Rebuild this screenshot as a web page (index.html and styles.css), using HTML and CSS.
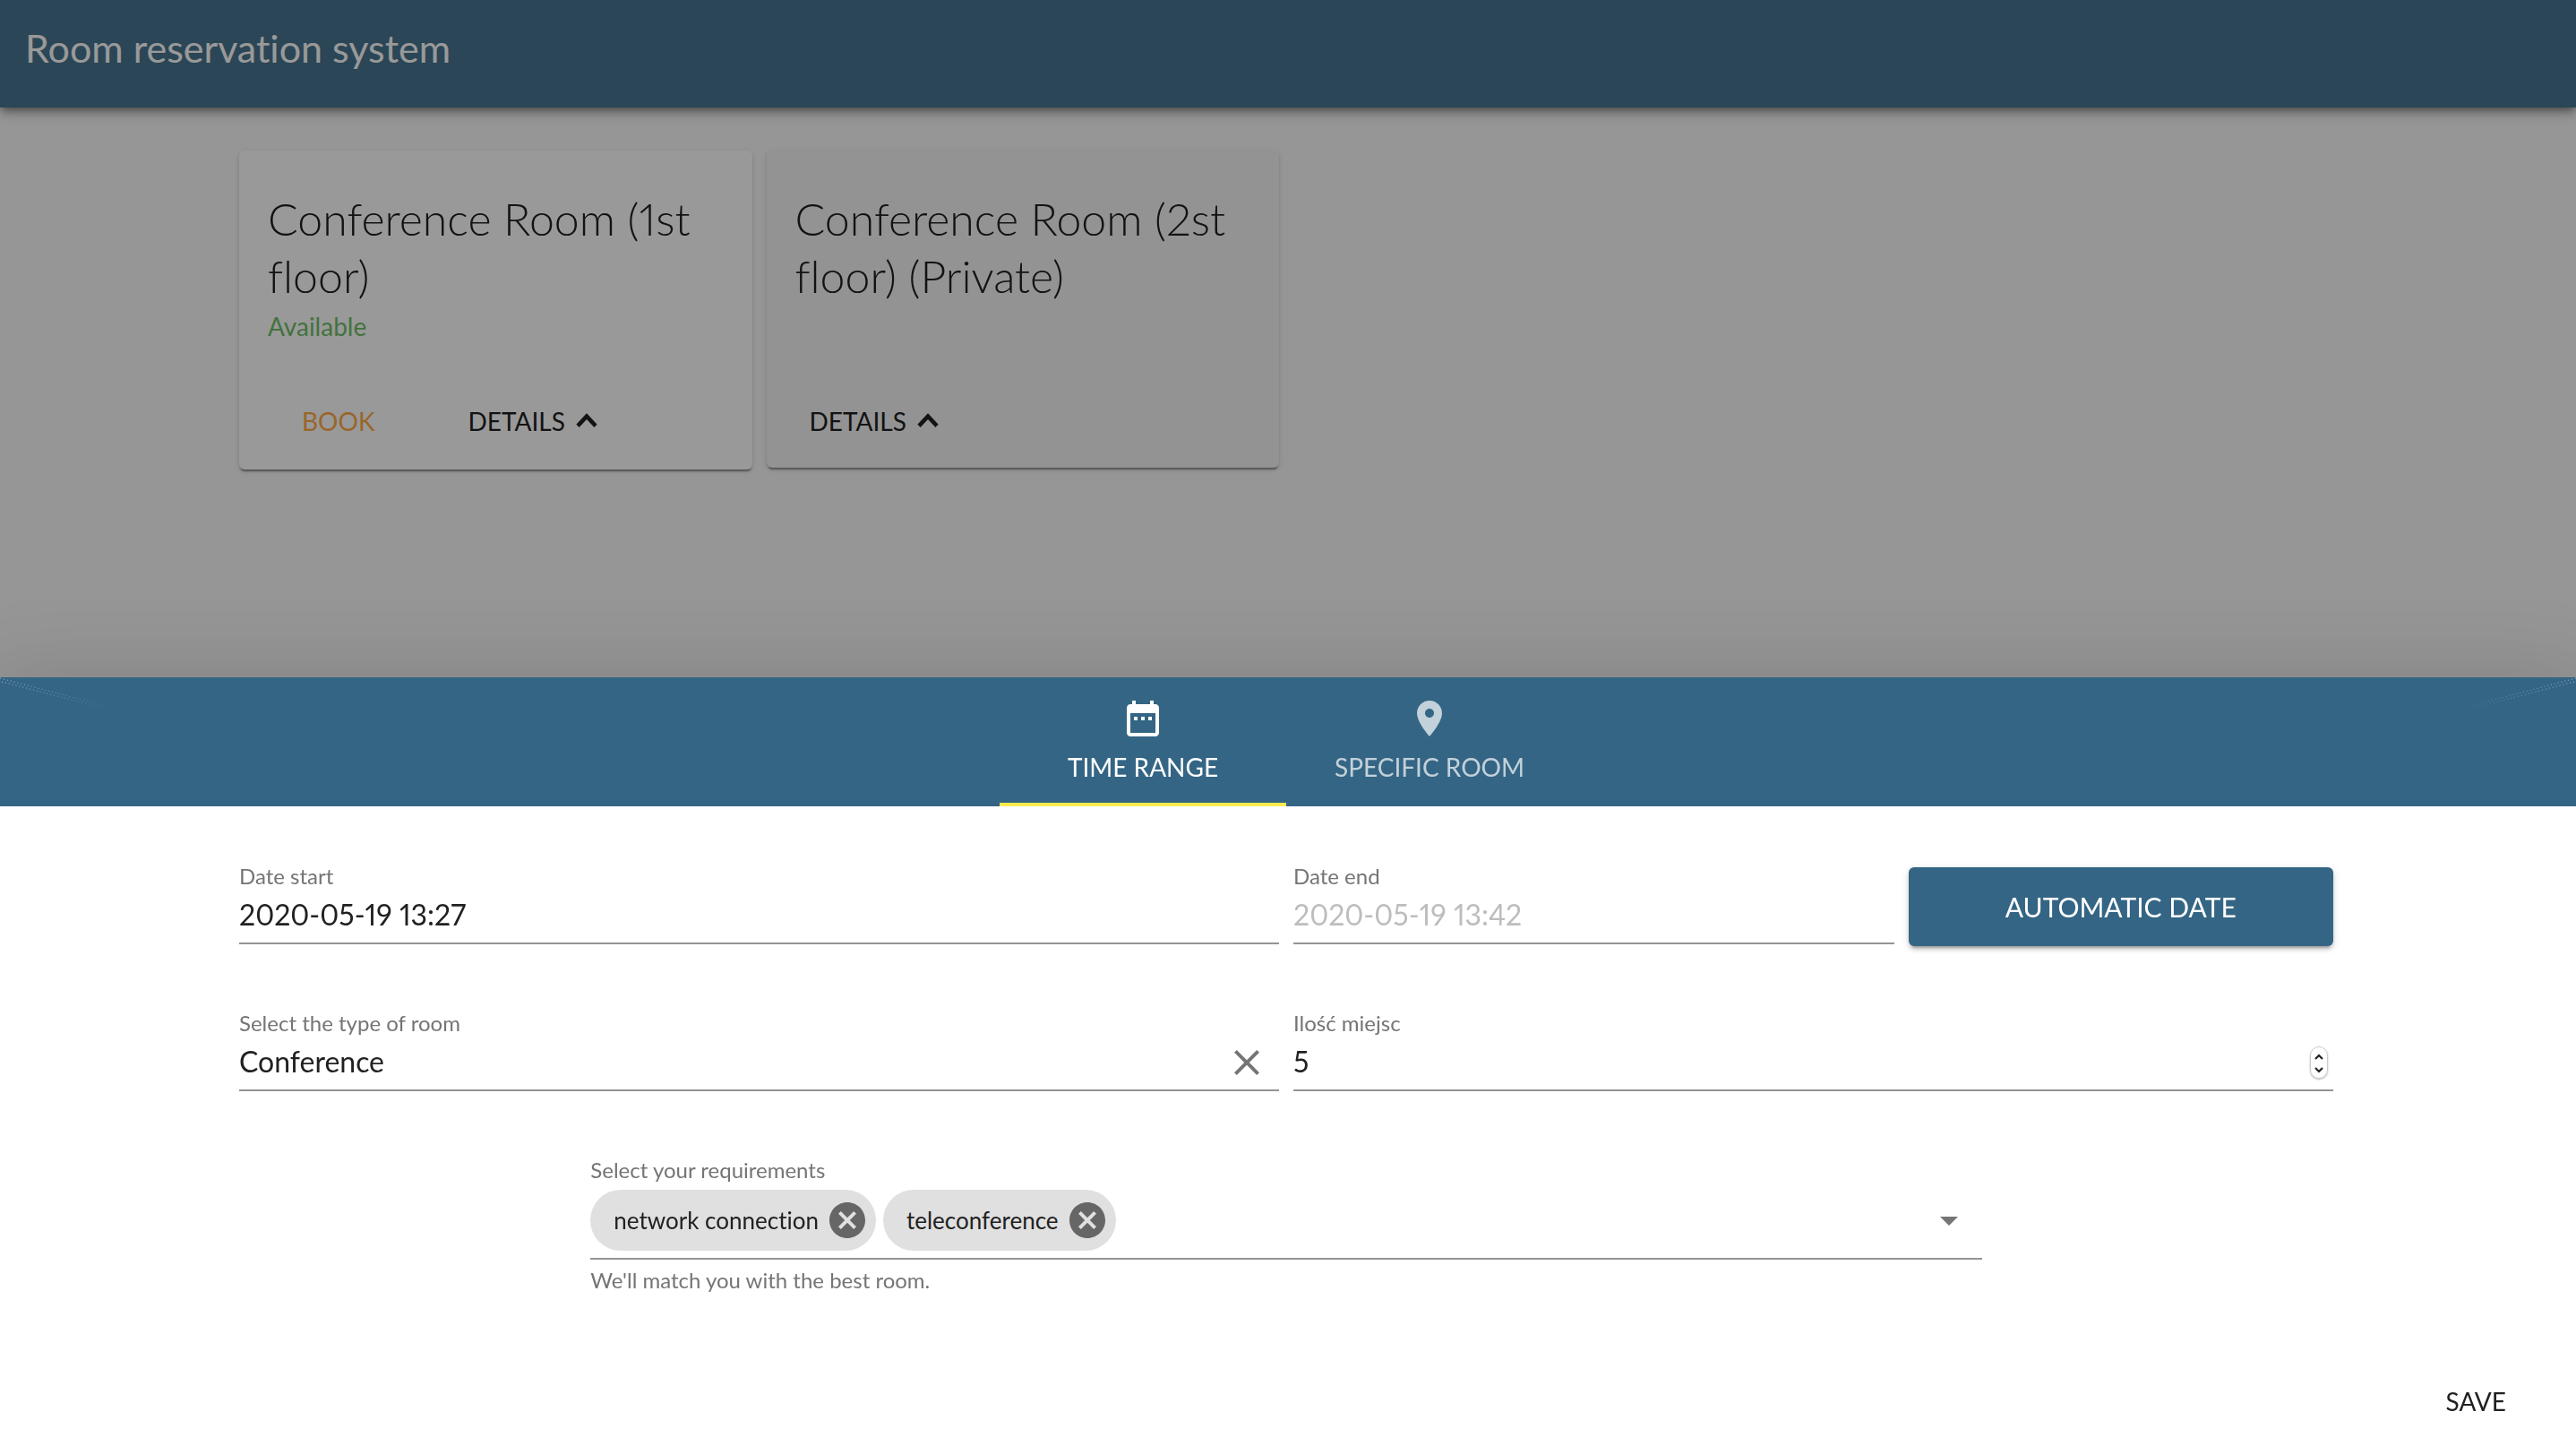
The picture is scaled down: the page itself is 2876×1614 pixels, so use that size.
FILE: index.html
```html
<!DOCTYPE html>
<html lang="en">
<head>
    <meta charset="UTF-8">
    <meta name="viewport" content="width=device-width, initial-scale=1.0">
    <title>Room reservation system</title>
    <link rel="stylesheet" href="styles.css">
</head>
<body>
    <header class="app-bar">
        <h1>Room reservation system</h1>
    </header>

    <main class="page">
        <div class="container grid rooms">
            <article class="card">
                <h2>Conference Room (1st floor)</h2>
                <p class="status">Available</p>
                <div class="card-actions">
                    <button type="button" class="btn btn-book">Book</button>
                    <button type="button" class="btn">Details
                        <svg class="chevron" viewBox="0 0 24 24"><path d="M4.5 16l7.5-8 7.5 8" fill="none" stroke="currentColor" stroke-width="3.4"/></svg>
                    </button>
                </div>
            </article>
            <article class="card card-private">
                <h2>Conference Room (2st floor) (Private)</h2>
                <div class="card-actions">
                    <button type="button" class="btn">Details
                        <svg class="chevron" viewBox="0 0 24 24"><path d="M4.5 16l7.5-8 7.5 8" fill="none" stroke="currentColor" stroke-width="3.4"/></svg>
                    </button>
                </div>
            </article>
        </div>
    </main>

    <div class="backdrop"></div>

    <section class="sheet">
        <div class="tabs" role="tablist">
            <svg class="streak streak-left" viewBox="0 0 164 48">
                <defs>
                    <linearGradient id="fade" gradientUnits="userSpaceOnUse" x1="0" y1="0" x2="130" y2="0">
                        <stop offset="0" stop-color="#fff" stop-opacity="0.6"/>
                        <stop offset="1" stop-color="#fff" stop-opacity="0"/>
                    </linearGradient>
                </defs>
                <path d="M0 1L164 44M2 5L164 47" stroke="url(#fade)" stroke-dasharray="1 3"/>
            </svg>
            <button type="button" class="tab tab-active" role="tab" aria-selected="true">
                <svg class="icon" viewBox="0 0 24 24"><path fill="currentColor" d="M9 11H7v2h2v-2zm4 0h-2v2h2v-2zm4 0h-2v2h2v-2zm2-7h-1V2h-2v2H8V2H6v2H5c-1.110 0-1.990.9-1.990 2L3 20c0 1.100.89 2 2 2h14c1.100 0 2-.9 2-2V6c0-1.100-.9-2-2-2zm0 16H5V9h14v11z"/></svg>
                Time range
            </button>
            <button type="button" class="tab" role="tab" aria-selected="false">
                <svg class="icon" viewBox="0 0 24 24"><path fill="currentColor" d="M12 2C8.130 2 5 5.130 5 9c0 5.250 7 13 7 13s7-7.750 7-13c0-3.870-3.130-7-7-7zm0 9.500c-1.380 0-2.500-1.120-2.500-2.500s1.120-2.500 2.500-2.500 2.500 1.120 2.500 2.500-1.120 2.500-2.500 2.500z"/></svg>
                Specific room
            </button>
            <svg class="streak streak-right" viewBox="0 0 164 48">
                <path d="M0 1L164 44M2 5L164 47" stroke="url(#fade)" stroke-dasharray="1 3"/>
            </svg>
        </div>

        <form class="sheet-form">
            <div class="container grid fields">
                <div class="field half">
                    <label for="date-start">Date start</label>
                    <div class="control"><input type="text" id="date-start" value="2020-05-19 13:27"></div>
                </div>
                <div class="half date-end">
                    <div class="field">
                        <label for="date-end">Date end</label>
                        <div class="control"><input type="text" id="date-end" value="2020-05-19 13:42" disabled></div>
                    </div>
                    <button type="button" class="btn-primary">Automatic date</button>
                </div>
                <div class="field half">
                    <label for="room-type">Select the type of room</label>
                    <div class="control">
                        <input type="text" id="room-type" value="Conference">
                        <button type="button" class="icon-btn clear" aria-label="Clear">
                            <svg class="icon" viewBox="0 0 24 24"><path fill="currentColor" d="M19 6.410L17.590 5 12 10.590 6.410 5 5 6.410 10.590 12 5 17.590 6.410 19 12 13.410 17.590 19 19 17.590 13.410 12z"/></svg>
                        </button>
                    </div>
                </div>
                <div class="field half">
                    <label for="seats">Ilość miejsc</label>
                    <div class="control">
                        <input type="number" id="seats" value="5">
                        <span class="stepper">
                            <svg viewBox="0 0 10 24"><path d="M1 7l4-4 4 4M1 17l4 4 4-4" fill="none" stroke="currentColor" stroke-width="2.200"/></svg>
                        </span>
                    </div>
                </div>
                <div class="field requirements">
                    <label for="requirements">Select your requirements</label>
                    <div class="control control-chips">
                        <span class="chip">network connection
                            <button type="button" class="icon-btn" aria-label="Remove network connection">
                                <svg class="icon" viewBox="0 0 24 24"><path fill="currentColor" d="M12 2C6.470 2 2 6.470 2 12s4.470 10 10 10 10-4.470 10-10S17.530 2 12 2zm5 13.590L15.590 17 12 13.410 8.410 17 7 15.590 10.590 12 7 8.410 8.410 7 12 10.590 15.590 7 17 8.410 13.410 12 17 15.590z"/></svg>
                            </button>
                        </span>
                        <span class="chip">teleconference
                            <button type="button" class="icon-btn" aria-label="Remove teleconference">
                                <svg class="icon" viewBox="0 0 24 24"><path fill="currentColor" d="M12 2C6.470 2 2 6.470 2 12s4.470 10 10 10 10-4.470 10-10S17.530 2 12 2zm5 13.590L15.590 17 12 13.410 8.410 17 7 15.590 10.590 12 7 8.410 8.410 7 12 10.590 15.590 7 17 8.410 13.410 12 17 15.590z"/></svg>
                            </button>
                        </span>
                        <input type="text" id="requirements">
                        <button type="button" class="icon-btn arrow" aria-label="Open">
                            <svg class="icon" viewBox="0 0 24 24"><path fill="currentColor" d="M7 10l5 5 5-5z"/></svg>
                        </button>
                    </div>
                    <p class="helper">We'll match you with the best room.</p>
                </div>
            </div>
            <div class="sheet-actions">
                <button type="button" class="btn">Save</button>
            </div>
        </form>
    </section>
</body>
</html>
```
FILE: styles.css
```css
* { box-sizing: border-box; }
body { margin: 0; min-height: 100vh; background: #fafafa; color: #212121; font-family: Lato, sans-serif; font-size: 28px; font-variant-ligatures: none; font-variant-numeric: proportional-nums; }
h1, h2, p { margin: 0; font-weight: 400; }
button, input { font-family: inherit; font-variant: inherit; color: inherit; }
button { background: none; border: none; padding: 0; cursor: pointer; }
input { border: none; outline: none; background: none; padding: 0; min-width: 0; }

.container { max-width: 2338px; margin: 0 auto; }
.grid { display: grid; grid-template-columns: repeat(12, 1fr); column-gap: 16px; }
.icon { display: block; width: 48px; height: 48px; }

/* app bar */
.app-bar { height: 120px; padding: 28px; background: #48758f; color: #fff; box-shadow: 0 4px 8px -2px rgba(0,0,0,0.4), 0 8px 10px rgba(0,0,0,0.14), 0 2px 20px rgba(0,0,0,0.12); }
.app-bar h1 { font-size: 43px; line-height: 52px; }

/* rooms */
.page { padding: 48px 4px 0 0; }
.rooms { align-items: start; }
.card { grid-column: span 3; display: flex; flex-direction: column; min-height: 356px; padding: 44px 32px 28px; background: #fff; border-radius: 6px; box-shadow: 0 4px 2px -2px rgba(0,0,0,0.3), 0 2px 2px rgba(0,0,0,0.14), 0 2px 6px rgba(0,0,0,0.12); }
.card-private { min-height: 354px; padding-bottom: 26px; background: #f5f5f5; }
.card h2 { font-size: 50px; font-weight: 300; line-height: 64px; }
.status { color: #6fbf68; line-height: 48px; }
.card-actions { display: flex; gap: 104px; margin-top: auto; padding: 0 16px; }
.card:not(.card-private) .card-actions { padding: 0 38px; }
.btn { display: flex; align-items: center; height: 52px; font-size: 28px; text-transform: uppercase; }
.btn-book { color: #ffaa43; }
.chevron { width: 32px; height: 32px; margin-left: 8px; }

.backdrop { position: fixed; inset: 0; background: rgba(0,0,0,0.4); }

/* bottom sheet */
.sheet { position: fixed; left: 0; right: 0; bottom: 0; background: #fff; box-shadow: 0 18px 92px 16px rgba(0,0,0,0.14); }
.tabs { position: relative; display: flex; justify-content: center; padding-right: 4px; background: #346584; }
.tab { display: flex; flex-direction: column; align-items: center; gap: 10px; width: 320px; height: 144px; padding-top: 22px; border-bottom: 4px solid transparent; color: rgba(255,255,255,0.7); font-size: 28px; line-height: 40px; text-transform: uppercase; }
.tab-active { color: #fff; border-color: #ffeb50; }
.streak { position: absolute; top: 0; width: 164px; height: 48px; }
.streak-left { left: 0; }
.streak-right { right: 0; transform: scaleX(-1); }

.sheet-form { padding: 64px 4px 24px 0; }
.fields { row-gap: 72px; grid-auto-rows: minmax(92px, auto); }
.half { grid-column: span 6; }
.requirements { grid-column: 3 / span 8; }
.date-end { display: flex; align-items: flex-start; gap: 16px; }
.date-end .field { flex: 1; }
.field label { display: block; color: #757575; font-size: 24px; line-height: 28px; }
.control { display: flex; align-items: center; height: 62px; border-bottom: 2px solid #949494; }
.control input { flex: 1; height: 54px; padding-bottom: 4px; font-size: 32px; }
.control input:disabled { color: #bdbdbd; }
.control input[type=number] { appearance: textfield; }
.icon-btn { color: #757575; }
.clear { margin-right: 12px; }
.btn-primary { width: calc((100% + 16px) * 5 / 12 - 16px); height: 88px; margin-top: 4px; background: #346584; color: #fff; border-radius: 6px; font-size: 30px; text-transform: uppercase; box-shadow: 0 6px 2px -4px rgba(0,0,0,0.2), 0 4px 4px rgba(0,0,0,0.14), 0 2px 10px rgba(0,0,0,0.12); }
.stepper { width: 20px; height: 36px; margin-right: 6px; padding: 6px 4px; border: 1px solid #ccc; border-radius: 10px; box-shadow: 0 1px 2px rgba(0,0,0,0.3); }
.stepper svg { display: block; width: 10px; height: 24px; }

.control-chips { height: auto; gap: 8px; padding: 8px 0; }
.chip { display: flex; align-items: center; gap: 8px; height: 68px; padding: 0 8px 0 26px; border-radius: 34px; background: #e0e0e0; font-size: 26px; }
.chip .icon-btn { color: #666; }
.arrow { margin-right: 13px; }
.helper { margin-top: 8px; color: #757575; font-size: 24px; line-height: 30px; }
.sheet-actions { display: flex; justify-content: flex-end; margin-top: 94px; padding: 0 74px; }
```
